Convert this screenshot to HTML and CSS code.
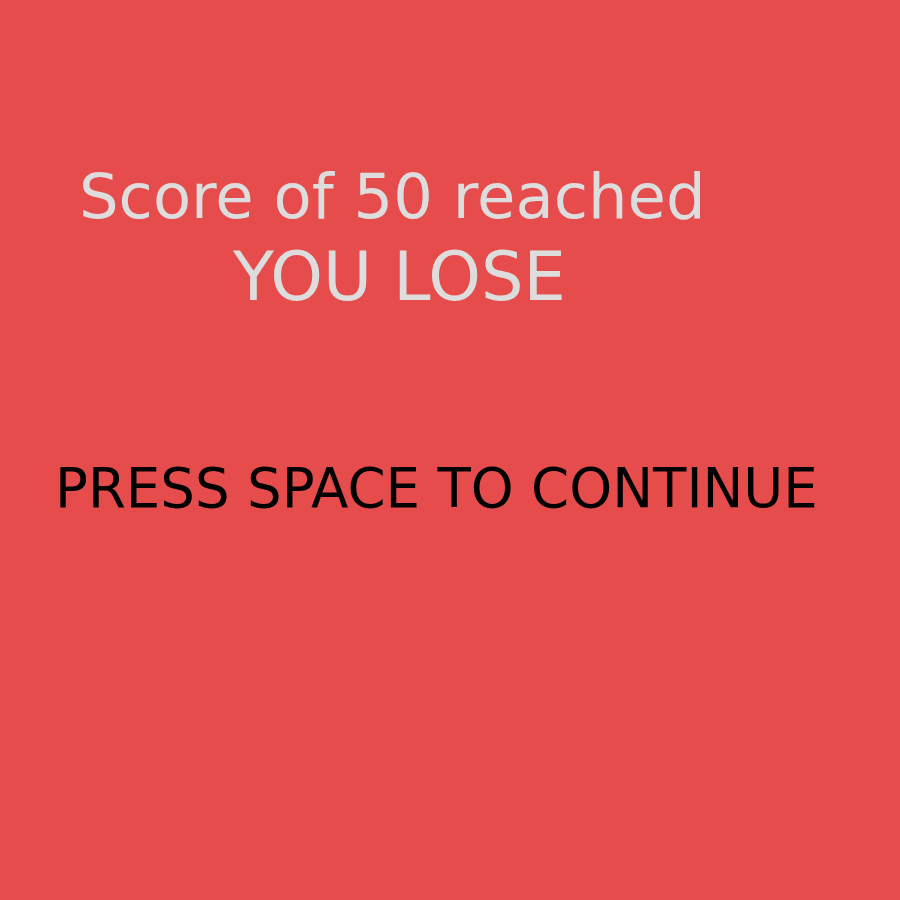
FILE: index.html
```html
<!DOCTYPE html>
<html>
<head>
<meta charset="utf-8">
<link rel="stylesheet" href="styles.css">
</head>
<body>
<main class="screen">
  <div class="result">
    <p class="line score">Score of 50 reached</p>
    <p class="line lose">YOU LOSE</p>
  </div>
  <p class="prompt">PRESS SPACE TO CONTINUE</p>
</main>
</body>
</html>
```
FILE: styles.css
```css
html, body {
  margin: 0;
  padding: 0;
  background: #e74c4c;
}
.screen {
  width: 900px;
  height: 900px;
  font-family: "DejaVu Sans", Verdana, sans-serif;
}
.result {
  padding-top: 157px;
  color: #dddddd;
}
.line {
  margin: 0;
  line-height: 80px;
  white-space: nowrap;
}
.score {
  font-size: 62.4px;
  padding-left: 79px;
}
.lose {
  font-size: 67px;
  padding-left: 233px;
}
.prompt {
  margin: 139px 0 0 55px;
  font-size: 54.6px;
  line-height: 64px;
  color: #000;
  white-space: nowrap;
}
```
